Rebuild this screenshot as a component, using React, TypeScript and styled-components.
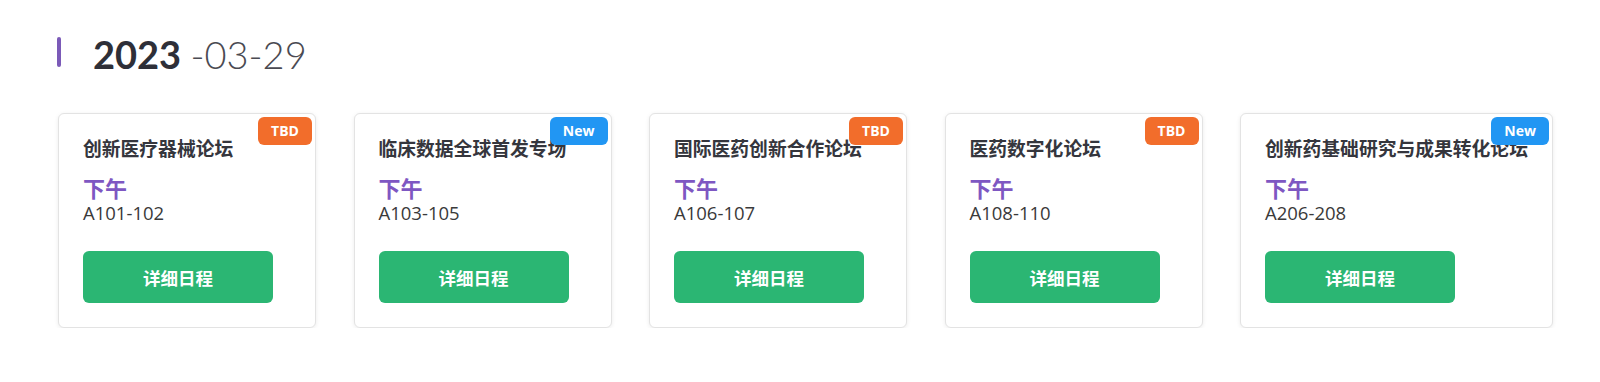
import React from "react";
import styled, { createGlobalStyle } from "styled-components";

const GlobalStyle = createGlobalStyle`
  html, body {
    margin: 0;
    padding: 0;
    background: #ffffff;
  }
  body {
    font-family: "Open Sans", "Noto Sans CJK SC", sans-serif;
    color: #333333;
  }
  * { box-sizing: border-box; }
`;

const Page = styled.div`
  padding: 37px 47px 0 58px;
`;

const DateHeader = styled.h2`
  display: flex;
  align-items: center;
  gap: 32px;
  margin: 0;
  height: 30px;
  margin-left: -1px;
`;

const Bar = styled.span`
  display: block;
  width: 4px;
  height: 30px;
  border-radius: 2px;
  background: #7b5ab8;
`;

const DateText = styled.span`
  font-family: Lato, "Open Sans", sans-serif;
  font-size: 38px;
  line-height: 30px;
  color: #2e2f38;
  position: relative;
  top: 2px;
`;

const Year = styled.span`
  font-weight: 700;
`;

const Rest = styled.span`
  font-weight: 300;
  color: #4a4a52;
`;

const CardRow = styled.div`
  display: flex;
  gap: 37.5px;
  margin-top: 46px;
  align-items: flex-start;
`;

const Card = styled.div`
  position: relative;
  flex: none;
  min-width: 258px;
  padding: 22px 24px 24px;
  background: #ffffff;
  border: 1px solid #e3e3e3;
  border-radius: 6px;
  box-shadow: 0 1px 4px rgba(0, 0, 0, 0.08);
`;

const Badge = styled.span<{ $tone: "tbd" | "new" }>`
  position: absolute;
  top: 3px;
  right: 3px;
  height: 28px;
  padding: 0 13px;
  border-radius: 6px;
  background: ${(p) => (p.$tone === "new" ? "#2196f3" : "#f26d2b")};
  color: #ffffff;
  font-family: "Open Sans", sans-serif;
  font-weight: 700;
  font-size: 14px;
  line-height: 28px;
`;

const Title = styled.div`
  font-family: "Noto Sans CJK SC", sans-serif;
  font-weight: 700;
  font-size: 18.8px;
  line-height: 24px;
  color: #35363d;
  white-space: nowrap;
`;

const Period = styled.div`
  margin-top: 14px;
  font-family: "Noto Sans CJK SC", sans-serif;
  font-weight: 700;
  font-size: 22px;
  line-height: 26px;
  color: #7e57c2;
`;

const Room = styled.div`
  font-family: "Open Sans", sans-serif;
  font-size: 18.5px;
  line-height: 26px;
  color: #3a3a3a;
`;

const DetailButton = styled.button`
  display: block;
  margin-top: 25px;
  width: 190px;
  height: 52px;
  border: none;
  border-radius: 6px;
  background: #2bb673;
  color: #ffffff;
  font-family: "Noto Sans CJK SC", sans-serif;
  font-weight: 700;
  font-size: 17.5px;
  cursor: pointer;
`;

type Session = {
  title: string;
  room: string;
  badge: "tbd" | "new";
};

const sessions: Session[] = [
  { title: "创新医疗器械论坛", room: "A101-102", badge: "tbd" },
  { title: "临床数据全球首发专场", room: "A103-105", badge: "new" },
  { title: "国际医药创新合作论坛", room: "A106-107", badge: "tbd" },
  { title: "医药数字化论坛", room: "A108-110", badge: "tbd" },
  { title: "创新药基础研究与成果转化论坛", room: "A206-208", badge: "new" },
];

export default function App() {
  return (
    <>
      <GlobalStyle />
      <Page>
        <DateHeader>
          <Bar />
          <DateText>
            <Year>2023</Year> <Rest>-03-29</Rest>
          </DateText>
        </DateHeader>
        <CardRow>
          {sessions.map((s) => (
            <Card key={s.room}>
              <Badge $tone={s.badge}>{s.badge === "new" ? "New" : "TBD"}</Badge>
              <Title>{s.title}</Title>
              <Period>下午</Period>
              <Room>{s.room}</Room>
              <DetailButton>详细日程</DetailButton>
            </Card>
          ))}
        </CardRow>
      </Page>
    </>
  );
}
